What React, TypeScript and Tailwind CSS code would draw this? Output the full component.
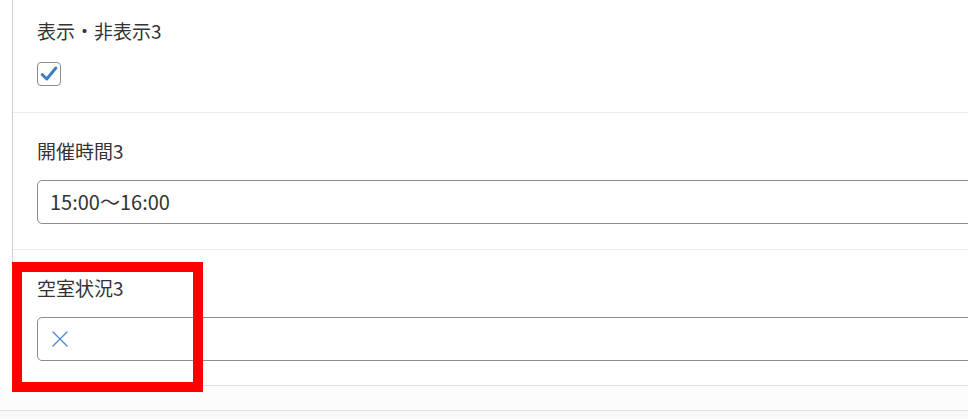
const FONT = { fontFamily: '"Noto Sans CJK JP", "Noto Sans", sans-serif' };

function CheckIcon() {
  return (
    <svg viewBox="0 0 24 24" className="w-[22px] h-[22px]" fill="none" stroke="#3b7cc4"
         strokeWidth="3.2" strokeLinecap="round" strokeLinejoin="round" aria-hidden="true">
      <path d="M4.5 12.5 L9.5 17.5 L19.5 5.5" />
    </svg>
  );
}

function CrossIcon() {
  return (
    <svg viewBox="0 0 16 16" className="w-4 h-4" fill="none" stroke="#4f86c6"
         strokeWidth="1.3" strokeLinecap="round" aria-hidden="true">
      <path d="M1 1 L15 15 M15 1 L1 15" />
    </svg>
  );
}

function Label({ children }: { children: React.ReactNode }) {
  return (
    <div className="text-[19px] leading-[24px] text-[#333] font-normal" style={FONT}>
      {children}
    </div>
  );
}

export default function App() {
  return (
    <div className="relative w-[968px] h-[419px] overflow-hidden bg-white" style={FONT}>
      <div className="w-[1200px] pl-[12px]">
        <div className="border-l border-[#cfcfcf]">
          {/* 表示・非表示 */}
          <div className="pl-[24px] pt-[19px] pb-[26px] border-b border-[#ececec]">
            <Label>表示・非表示3</Label>
            <div className="mt-[19px] w-6 h-6 rounded-[4px] border border-[#8d8d8d] flex items-center justify-center">
              <CheckIcon />
            </div>
          </div>

          {/* 開催時間 */}
          <div className="pl-[24px] pt-[26px] pb-[25px] border-b border-[#ececec]">
            <Label>開催時間3</Label>
            <div className="mt-[17px] h-[44px] rounded-[5px] border border-[#8d8d8d] flex items-center pl-[12px] text-[20px] text-[#333]">
              15:00〜16:00
            </div>
          </div>

          {/* 空室状況 */}
          <div className="pl-[24px] pt-[26px] pb-[24px] border-b border-[#dcdcdc]">
            <Label>空室状況3</Label>
            <div className="mt-[17px] h-[44px] rounded-[5px] border border-[#8d8d8d] flex items-center pl-[14px]">
              <CrossIcon />
            </div>
          </div>
        </div>

        <div className="-ml-[12px] h-[25px] bg-[#fcfcfc] border-b border-[#e4e4e4]" />
        <div className="-ml-[12px] h-[20px] bg-[#f9f9f9]" />
      </div>

      {/* highlight box */}
      <div className="absolute left-[12px] top-[262px] w-[191px] h-[130px] border-[10px] border-[#ff0000]" />
    </div>
  );
}
